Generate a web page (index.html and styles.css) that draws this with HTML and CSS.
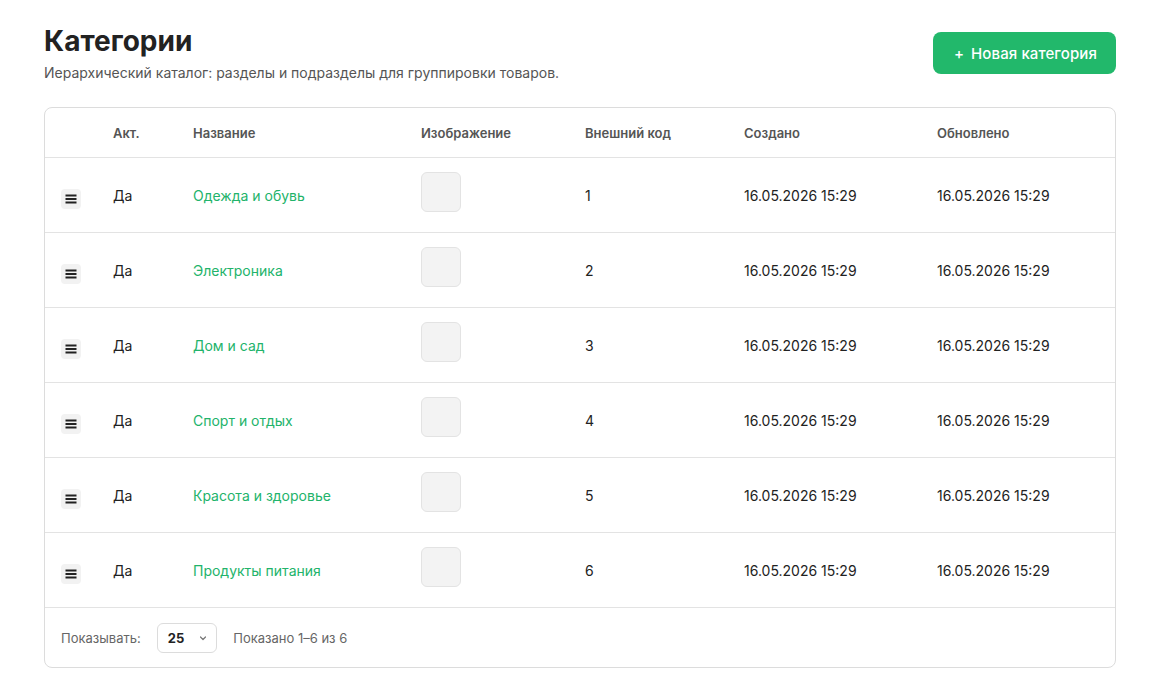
FILE: index.html
```html
<!DOCTYPE html>
<html lang="ru">
<head>
  <meta charset="UTF-8">
  <meta name="viewport" content="width=device-width, initial-scale=1.0">
  <title>Категории</title>
  <link rel="stylesheet" href="styles.css">
</head>
<body>
  <div class="page">
    <div class="page-head">
      <div>
        <h1 class="page-title">Категории</h1>
        <p class="page-subtitle">Иерархический каталог: разделы и подразделы для группировки товаров.</p>
      </div>
      <button class="btn-new"><span class="plus">+</span>Новая категория</button>
    </div>

    <div class="card">
      <table class="grid">
        <colgroup>
          <col style="width:68px">
          <col style="width:80px">
          <col style="width:228px">
          <col style="width:164px">
          <col style="width:159px">
          <col style="width:193px">
          <col>
        </colgroup>
        <thead>
          <tr>
            <th></th>
            <th>Акт.</th>
            <th>Название</th>
            <th>Изображение</th>
            <th>Внешний код</th>
            <th>Создано</th>
            <th>Обновлено</th>
          </tr>
        </thead>
        <tbody id="rows"></tbody>
      </table>
      <div class="card-foot">
        <span class="muted">Показывать:</span>
        <div class="page-size">
          <span>25</span>
          <svg width="10" height="10" viewBox="0 0 10 10"><path d="M2.5 4l2.5 2.5L7.5 4" fill="none" stroke="#777" stroke-width="1.2" stroke-linecap="round" stroke-linejoin="round"/></svg>
        </div>
        <span class="muted">Показано 1–6 из 6</span>
      </div>
    </div>
  </div>

  <script>
    const categories = [
      'Одежда и обувь',
      'Электроника',
      'Дом и сад',
      'Спорт и отдых',
      'Красота и здоровье',
      'Продукты питания'
    ];

    const tbody = document.getElementById('rows');
    categories.forEach((name, i) => {
      const tr = document.createElement('tr');
      tr.innerHTML = `
        <td><span class="handle"><svg width="12" height="10" viewBox="0 0 12 10"><path d="M0.5 1.5h11M0.5 5h11M0.5 8.5h11" stroke="#222" stroke-width="1.9"/></svg></span></td>
        <td>Да</td>
        <td><a href="#" class="cat-link">${name}</a></td>
        <td><div class="thumb"></div></td>
        <td>${i + 1}</td>
        <td>16.05.2026 15:29</td>
        <td>16.05.2026 15:29</td>`;
      tbody.appendChild(tr);
    });
  </script>
</body>
</html>
```

FILE: styles.css
```css
body {
  margin: 0;
  font-family: Inter, "Noto Sans", Arial, sans-serif;
  background: #fff;
  color: #222;
}

.page {
  padding: 24px 44px;
}

.page-head {
  display: flex;
  justify-content: space-between;
  align-items: flex-start;
  margin-bottom: 25px;
}

.page-title {
  margin: 0;
  font-size: 28px;
  line-height: 34px;
  font-weight: 700;
  color: #222;
}

.page-subtitle {
  margin: 6px 0 0;
  font-size: 14px;
  line-height: 18px;
  color: #555;
}

.btn-new {
  margin-top: 8px;
  height: 42px;
  padding: 0 19px 0 21px;
  border: none;
  border-radius: 8px;
  background-color: #22b86b;
  color: #fff;
  font-family: inherit;
  font-size: 15px;
  font-weight: 500;
  letter-spacing: 0.1px;
  cursor: pointer;
}

.plus {
  margin-right: 7px;
}

.card {
  border: 1px solid #dcdcdc;
  border-radius: 8px;
  overflow: hidden;
}

.grid {
  width: 100%;
  border-collapse: collapse;
  table-layout: fixed;
}

.grid th,
.grid td {
  padding: 0;
  text-align: left;
  white-space: nowrap;
}

.grid th:first-child,
.grid td:first-child {
  padding-left: 16px;
}

.grid th {
  height: 49px;
  font-size: 13px;
  font-weight: 600;
  color: #555;
  border-bottom: 1px solid #e3e3e3;
}

.grid td {
  height: 74px;
  font-size: 14px;
  color: #222;
  border-bottom: 1px solid #e3e3e3;
}

.handle {
  display: inline-flex;
  align-items: center;
  justify-content: center;
  width: 20px;
  height: 20px;
  margin-top: 8px;
  border-radius: 4px;
  background-color: #f2f2f2;
}

.cat-link {
  color: #22b36a;
  text-decoration: none;
}

.thumb {
  width: 38px;
  height: 38px;
  margin-top: -7px;
  border: 1px solid #e3e3e3;
  border-radius: 6px;
  background-color: #f3f3f3;
}

.card-foot {
  display: flex;
  align-items: center;
  height: 59px;
  padding: 0 16px;
  gap: 16px;
  font-size: 13px;
}

.muted {
  color: #666;
}

.page-size {
  display: flex;
  align-items: center;
  gap: 14px;
  height: 28px;
  padding: 0 8px 0 10px;
  border: 1px solid #dcdcdc;
  border-radius: 6px;
  font-weight: 700;
  color: #222;
}
```
